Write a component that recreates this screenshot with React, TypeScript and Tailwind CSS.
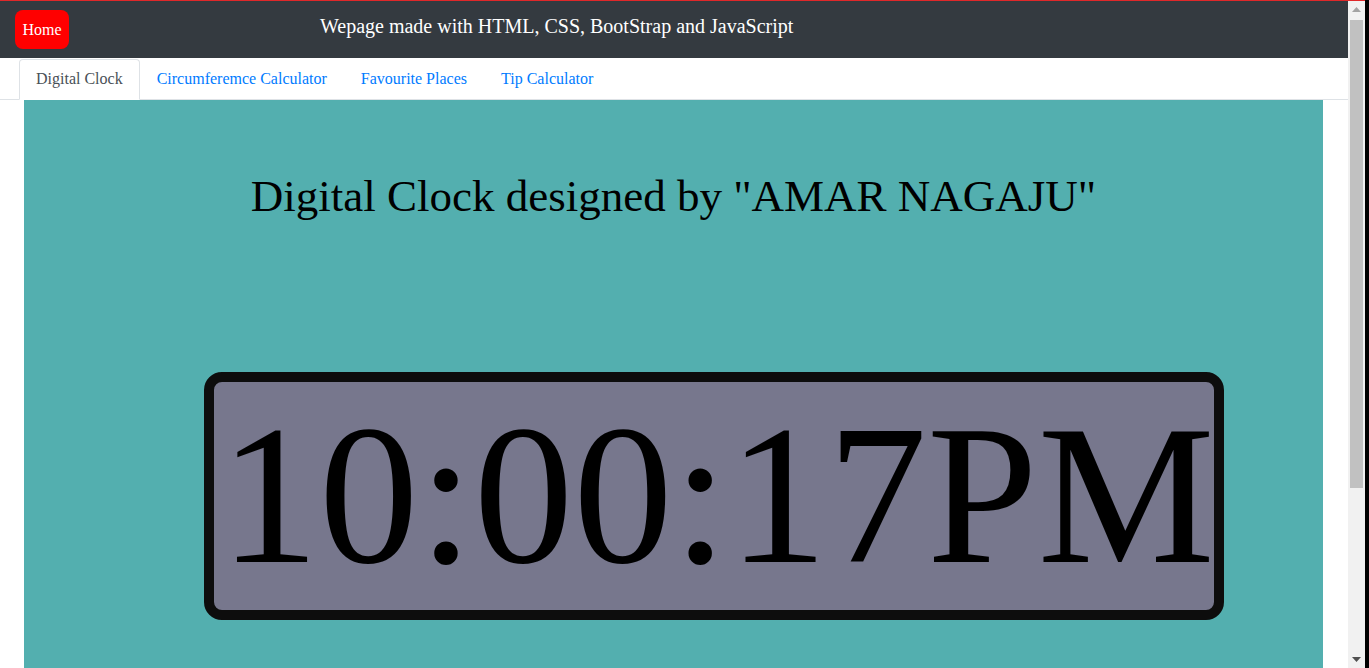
import React from "react";

const TABS = ["Digital Clock", "Circumferemce Calculator", "Favourite Places", "Tip Calculator"];

function Scrollbar() {
  return (
    <div className="w-[17px] flex-shrink-0 bg-[#f1f1f1] flex flex-col items-center">
      <div className="h-[17px] w-full flex items-center justify-center">
        <svg width="9" height="5" viewBox="0 0 9 5">
          <polygon points="0,5 9,5 4.5,0" fill="#a3a3a3" />
        </svg>
      </div>
      <div className="w-[13px] h-[468px] mt-[2px] bg-[#c1c1c1]" />
      <div className="flex-1" />
      <div className="h-[17px] w-full flex items-center justify-center">
        <svg width="9" height="5" viewBox="0 0 9 5">
          <polygon points="0,0 9,0 4.5,5" fill="#505050" />
        </svg>
      </div>
    </div>
  );
}

export default function App() {
  const serif = { fontFamily: '"Liberation Serif", "Times New Roman", serif' };

  return (
    <div className="flex h-[668px] w-full overflow-hidden bg-white" style={serif}>
      <div className="flex flex-col flex-1 min-w-0">
        {/* window edge */}
        <div className="h-[1px] bg-[#e0282a]" />
        <div className="flex flex-1 min-h-0">
          <div className="flex flex-col flex-1 min-w-0">
            {/* Navbar */}
            <nav className="h-[57px] bg-[#343a40] flex items-center px-[15px]">
              <button className="w-[54px] h-[39px] rounded-[8px] bg-[#ff0000] text-white text-[16px] flex items-center justify-center">
                Home
              </button>
              <span className="ml-[251px] mb-[7px] text-white text-[20px]">
                Wepage made with HTML, CSS, BootStrap and JavaScript
              </span>
            </nav>

            {/* Tabs */}
            <ul className="h-[42px] flex items-end pl-[19px] border-b border-[#dee2e6]">
              {TABS.map((t, i) => (
                <li
                  key={t}
                  className={`h-[41px] -mb-[1px] px-[16px] pb-[2px] flex items-center text-[16px] rounded-t-[4px] border ${
                    i === 0
                      ? "border-[#dee2e6] border-b-white bg-white text-[#495057]"
                      : "border-transparent text-[#007bff]"
                  }`}
                >
                  {t}
                </li>
              ))}
            </ul>

            {/* Content */}
            <div className="flex-1 ml-[24px] mr-[25px] bg-[#53afaf] flex flex-col">
              <h1 className="mt-[69px] text-center text-[45px] leading-[54px] text-black">
                Digital Clock designed by "AMAR NAGAJU"
              </h1>
              <div className="mt-[149px] ml-[180px] w-[1020px] h-[248px] border-[10px] border-[#0d0d0d] rounded-[18px] bg-[#77778d] flex items-center justify-center overflow-visible">
                <span className="text-[199px] leading-none text-black whitespace-nowrap mb-[2px] ml-[6px]">10:00:17PM</span>
              </div>
            </div>
          </div>
          <Scrollbar />
        </div>
      </div>
      <div className="w-[4px] flex-shrink-0 bg-black" />
    </div>
  );
}
